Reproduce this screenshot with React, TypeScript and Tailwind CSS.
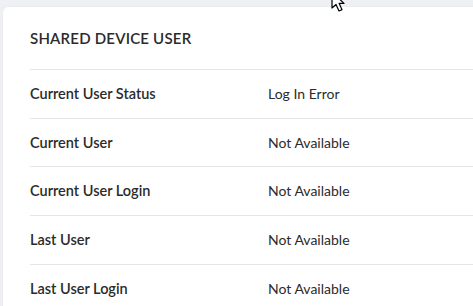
import React from "react";

const rows: [string, string][] = [
  ["Current User Status", "Log In Error"],
  ["Current User", "Not Available"],
  ["Current User Login", "Not Available"],
  ["Last User", "Not Available"],
  ["Last User Login", "Not Available"],
];

export default function App() {
  return (
    <div
      className="relative w-[473px] h-[306px] overflow-hidden bg-[#eef0f3] pt-[7px] pl-[3px]"
      style={{ fontFamily: "Lato, 'Noto Sans', sans-serif" }}
    >
      <div className="bg-white rounded-tl-[5px] h-[320px] w-[480px] pl-[27px] shadow-[0_0_1px_rgba(0,0,0,0.12)]">
        <div className="h-[62px] flex items-center">
          <h2 className="text-[15px] font-semibold tracking-[0.2px] text-[#2b2b2b] mt-[1px]">
            SHARED DEVICE USER
          </h2>
        </div>
        {rows.map(([label, value]) => (
          <div
            key={label}
            className="h-[48.7px] border-t border-[#e6e6e6] flex items-center text-[#2b2b2b]"
          >
            <div className="flex items-baseline leading-[20px]">
              <div className="w-[238px] font-semibold text-[14.5px]">{label}</div>
              <div className="font-normal text-[14px]">{value}</div>
            </div>
          </div>
        ))}
      </div>
      <svg
        className="absolute left-[330px] top-[-9px]"
        width="20"
        height="22"
        viewBox="0 0 20 22"
      >
        <path
          d="M2 1 L2 17 L6 13.5 L9 20 L12 18.7 L9.2 12.4 L14 12.4 Z"
          fill="white"
          stroke="black"
          strokeWidth="1.2"
          strokeLinejoin="round"
        />
      </svg>
    </div>
  );
}
